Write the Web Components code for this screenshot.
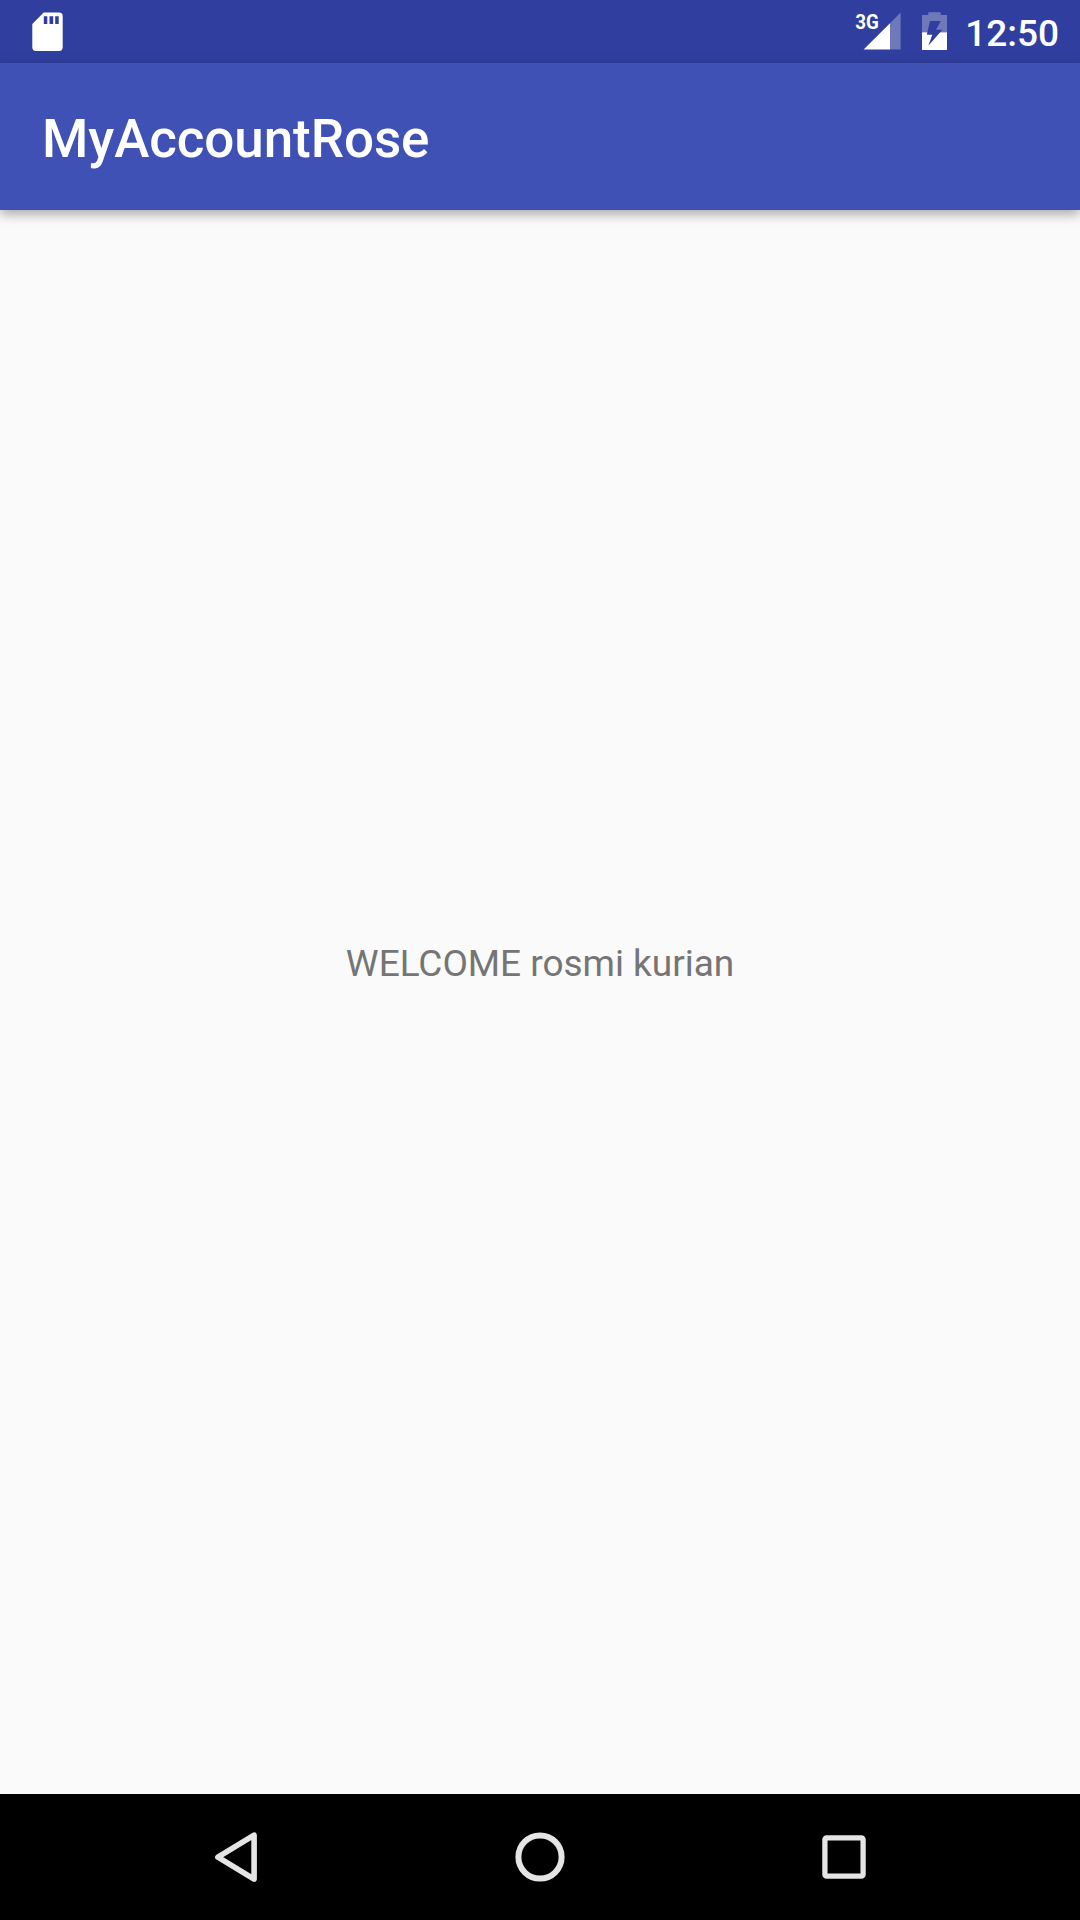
<!DOCTYPE html>
<html lang="en">
<head>
<meta charset="utf-8">
<title>MyAccountRose</title>
<style>
html,body{margin:0;height:100%}
body{font-family:Roboto,"Noto Sans",sans-serif;background:#fafafa;overflow:hidden}
</style>
</head>
<body>
<phone-screen>
  <status-bar slot="status">
    <sd-card-icon slot="start"></sd-card-icon>
    <signal-icon></signal-icon>
    <battery-icon></battery-icon>
    <status-clock>12:50</status-clock>
  </status-bar>
  <app-bar slot="bar">MyAccountRose</app-bar>
  <welcome-message>WELCOME rosmi kurian</welcome-message>
  <nav-bar slot="nav"></nav-bar>
</phone-screen>
<script>
const define = (name, html) => customElements.define(name, class extends HTMLElement {
  constructor() {
    super();
    this.attachShadow({mode: 'open'}).innerHTML = html;
  }
});

define('sd-card-icon', `
<style>:host{display:block;height:63px;width:31px}svg{display:block}</style>
<svg width="31" height="63" viewBox="32 0 31 63">
  <path fill="#fff" d="M43.7 12.5H59Q62.7 12.5 62.7 16.2V47.2Q62.7 50.9 59 50.9H36Q32.3 50.9 32.3 47.2V23.9Z"/>
  <path fill="#303f9f" d="M43.8 16.3h3.5V24h-3.5zM49.5 16.3h3.7V24h-3.7zM55.2 16.3h3.5V24h-3.5z"/>
</svg>`);

define('signal-icon', `
<style>:host{display:block;height:63px;width:47px}svg{display:block}text{font-family:Roboto,"Noto Sans",sans-serif;font-weight:700;font-size:21px}</style>
<svg width="47" height="63" viewBox="854 0 47 63">
  <path fill="#fff" fill-opacity=".3" d="M890 23.2L900.6 12.6V49.6H890Z"/>
  <path fill="#fff" d="M863.6 49.6L890 23.2V49.6Z"/>
  <text x="855.2" y="28.8" fill="#fff" textLength="23.6" lengthAdjust="spacingAndGlyphs">3G</text>
</svg>`);

define('battery-icon', `
<style>:host{display:block;height:63px;width:25px;margin-left:21px}svg{display:block}</style>
<svg width="25" height="63" viewBox="922 0 25 63">
  <defs><mask id="bolt"><path fill="#fff" d="M922 0h25v63h-25z"/><path fill="#000" d="M930 21H940.8L936 29.8H942.4L928.3 45.8L932.3 34.8H926.8Z"/></mask></defs>
  <g mask="url(#bolt)" fill="#fff">
    <path fill-opacity=".3" d="M928.3 12.3H940.7V15H947V32.3H922V15H928.3Z"/>
    <path d="M922 32.3H947V50H922Z"/>
  </g>
</svg>`);

define('status-clock', `
<style>:host{display:block;width:112px;text-align:right;padding-top:4px;color:#fff;font-size:37px;font-weight:500;line-height:59px;height:59px}</style><slot></slot>`);

define('status-bar', `
<style>:host{display:flex;justify-content:space-between;height:63px;box-sizing:border-box;padding:0 21px 0 32px;background:#303f9f}
.end{display:flex}</style>
<slot name="start"></slot><div class="end"><slot></slot></div>`);

define('app-bar', `
<style>:host{display:flex;align-items:center;height:147px;box-sizing:border-box;padding:5px 42px 0;background:#3f51b5;color:#fff;
font-size:53px;font-weight:500;letter-spacing:-.09px;line-height:62px;box-shadow:0 4px 11px rgba(0,0,0,.34)}</style><span><slot></slot></span>`);

define('welcome-message', `
<style>:host{display:block;color:#757575;font-size:37px;letter-spacing:-.03px;line-height:44px;white-space:nowrap}</style><slot></slot>`);

define('nav-bar', `
<style>:host{display:flex;justify-content:center;height:126px;background:#000}svg{display:block}</style>
<svg width="304" height="126" viewBox="84 1794 304 126" fill="none" stroke="#e5e5e5" stroke-width="5.6" stroke-linejoin="round"><path d="M217.9 1857.2L254.1 1835.1V1879.1Z"/></svg>
<svg width="304" height="126" viewBox="388 1794 304 126" fill="none" stroke="#e5e5e5" stroke-width="6"><circle cx="540" cy="1857" r="21.6"/></svg>
<svg width="304" height="126" viewBox="692 1794 304 126" fill="none" stroke="#e5e5e5" stroke-width="5.3"><rect x="824.9" y="1837.9" width="38.2" height="38.2" rx="1.7"/></svg>`);

define('phone-screen', `
<style>:host{display:flex;flex-direction:column;width:1080px;height:1920px;background:#fafafa}
main{flex:1;display:flex;align-items:center;justify-content:center;padding-bottom:76px}</style>
<slot name="status"></slot><slot name="bar"></slot><main><slot></slot></main><slot name="nav"></slot>`);
</script>
</body>
</html>
